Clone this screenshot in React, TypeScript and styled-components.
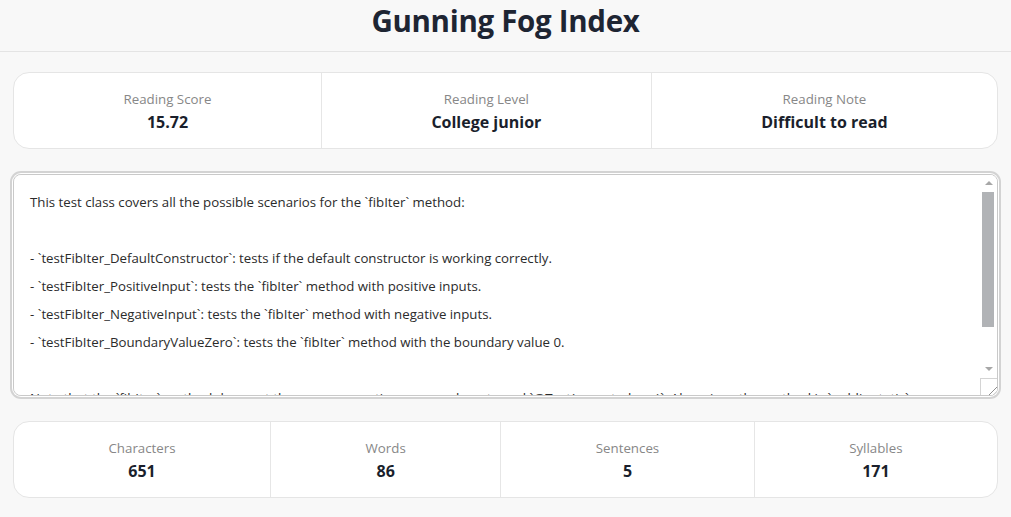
import React from 'react';
import styled, { createGlobalStyle } from 'styled-components';

const GlobalStyle = createGlobalStyle`
  html, body {
    margin: 0;
    padding: 0;
    background: #f8f8f8;
  }
  body {
    font-family: "Open Sans", "Noto Sans", Arial, sans-serif;
    color: #1f2533;
  }
  * {
    box-sizing: border-box;
  }
`;

const SAMPLE_TEXT = `This test class covers all the possible scenarios for the \`fibIter\` method:

- \`testFibIter_DefaultConstructor\`: tests if the default constructor is working correctly.
- \`testFibIter_PositiveInput\`: tests the \`fibIter\` method with positive inputs.
- \`testFibIter_NegativeInput\`: tests the \`fibIter\` method with negative inputs.
- \`testFibIter_BoundaryValueZero\`: tests the \`fibIter\` method with the boundary value 0.

Note that the \`fibIter\` method does not throw any exceptions, so we do not need \`@Test(expected = ...)\`. Also, since the method is \`public static\`, we can call it directly without creating an instance of the class.`;

const Header = styled.header`
  height: 52px;
  border-bottom: 1px solid #e4e4e4;
  display: flex;
  justify-content: center;
`;

const Title = styled.h1`
  margin: 0;
  font-size: 29.5px;
  line-height: 42px;
  font-weight: 700;
  color: #1e2533;
  letter-spacing: -0.3px;
`;

const Main = styled.main`
  padding: 20px 13px 19px;
  display: flex;
  flex-direction: column;
`;

const StatCard = styled.section`
  display: flex;
  background: #ffffff;
  border: 1px solid #e5e5e5;
  border-radius: 16px;
  overflow: hidden;
`;

const Stat = styled.div`
  flex: 1 1 auto;
  display: flex;
  flex-direction: column;
  align-items: center;
  padding: 16px 16px 15px;
  & + & {
    border-left: 1px solid #e6e6e6;
  }
`;

const StatLabel = styled.span`
  font-size: 13.3px;
  line-height: 20px;
  color: #878787;
`;

const StatValue = styled.span`
  margin-top: 2px;
  font-size: 16px;
  line-height: 22px;
  font-weight: 700;
  color: #1a1f2c;
`;

const EditorWrap = styled.div`
  position: relative;
  margin: 25px 0;
`;

const TextBox = styled.textarea`
  display: block;
  width: 100%;
  height: 222px;
  padding: 13px 30px 11px 16px;
  font-family: "Open Sans", "Noto Sans", Arial, sans-serif;
  font-size: 13.25px;
  line-height: 28px;
  color: #2b2b2b;
  background: #ffffff;
  border: 1px solid #c9c9c9;
  border-radius: 8px;
  box-shadow: 0 0 0 1px #ffffff, 0 0 0 3px #d3d3d3;
  outline: none;
  resize: none;
  overflow-y: scroll;
`;

/* drawn scrollbar, laid over the textarea's right edge */
const ScrollBar = styled.div`
  position: absolute;
  top: 1px;
  right: 1px;
  bottom: 1px;
  width: 17px;
  display: flex;
  flex-direction: column;
  pointer-events: none;
  background: #ffffff;
  border-radius: 0 7px 7px 0;
`;

const Arrow = styled.div<{ $dir: 'up' | 'down' }>`
  height: 17px;
  display: flex;
  justify-content: center;
  align-items: ${(p) => (p.$dir === 'up' ? 'flex-end' : 'flex-start')};
  padding: ${(p) => (p.$dir === 'up' ? '0 0 7px' : '6px 0 0')};
  &::before {
    content: '';
    border-left: 4px solid transparent;
    border-right: 4px solid transparent;
    ${(p) =>
      p.$dir === 'up'
        ? 'border-bottom: 4px solid #a7a7a7;'
        : 'border-top: 4px solid #a7a7a7;'}
  }
`;

const Track = styled.div`
  flex: 1;
  padding: 0 3px 0 2px;
`;

const Thumb = styled.div`
  height: 135px;
  background: #b1b3b6;
`;

const Corner = styled.div`
  height: 17px;
  border-top: 1px solid #d4d4d4;
  border-left: 1px solid #d4d4d4;
  border-bottom-right-radius: 7px;
  background:
    linear-gradient(135deg, transparent 72%, #8f8f8f 72%, #8f8f8f 77%, transparent 77%),
    linear-gradient(135deg, transparent 86%, #8f8f8f 86%, #8f8f8f 91%, transparent 91%),
    #ffffff;
`;

const topStats = [
  { label: 'Reading Score', value: '15.72' },
  { label: 'Reading Level', value: 'College junior' },
  { label: 'Reading Note', value: 'Difficult to read' },
];

const countStats = [
  { label: 'Characters', value: '651' },
  { label: 'Words', value: '86' },
  { label: 'Sentences', value: '5' },
  { label: 'Syllables', value: '171' },
];

export default function App() {
  return (
    <>
      <GlobalStyle />
      <Header>
        <Title>Gunning Fog Index</Title>
      </Header>
      <Main>
        <StatCard>
          {topStats.map((s) => (
            <Stat key={s.label}>
              <StatLabel>{s.label}</StatLabel>
              <StatValue>{s.value}</StatValue>
            </Stat>
          ))}
        </StatCard>
        <EditorWrap>
          <TextBox defaultValue={SAMPLE_TEXT} spellCheck={false} />
          <ScrollBar>
            <Arrow $dir="up" />
            <Track>
              <Thumb />
            </Track>
            <Arrow $dir="down" />
            <Corner />
          </ScrollBar>
        </EditorWrap>
        <StatCard>
          {countStats.map((s) => (
            <Stat key={s.label}>
              <StatLabel>{s.label}</StatLabel>
              <StatValue>{s.value}</StatValue>
            </Stat>
          ))}
        </StatCard>
      </Main>
    </>
  );
}
